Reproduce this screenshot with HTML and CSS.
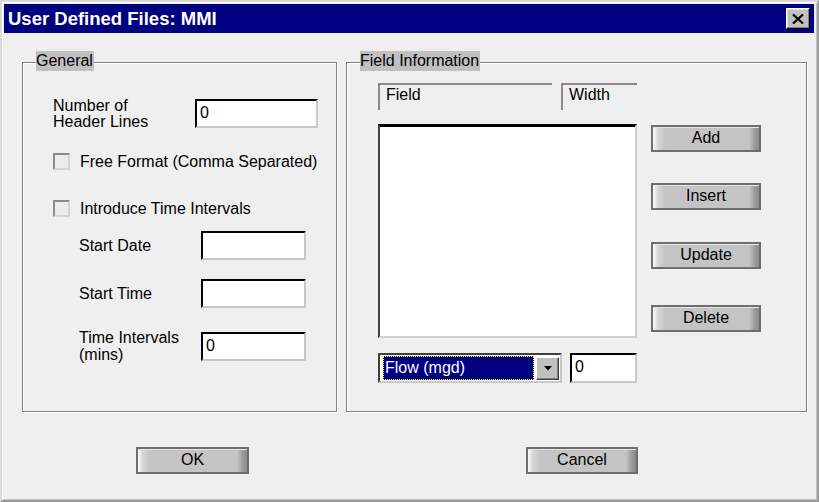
FILE: index.html
```html
<!DOCTYPE html>
<html>
<head>
<meta charset="utf-8">
<title>User Defined Files: MMI</title>
<link rel="stylesheet" href="styles.css">
</head>
<body>
<div class="window">
  <div class="titlebar">
    <span class="title">User Defined Files: MMI</span>
    <div class="close">
      <svg width="12" height="10" viewBox="0 0 12 10"><path d="M1 0.5 L11 9.5 M11 0.5 L1 9.5" stroke="#000" stroke-width="2.2" fill="none"/></svg>
    </div>
  </div>
  <div class="groups">
    <div class="group general">
      <div class="legend">General</div>
      <div class="row row-header">
        <div class="lbl lbl-header">Number of<br>Header Lines</div>
        <div class="textbox tb-header">0</div>
      </div>
      <div class="row check-row cr-1">
        <div class="checkbox"></div>
        <div class="lbl">Free Format (Comma Separated)</div>
      </div>
      <div class="row check-row cr-2">
        <div class="checkbox"></div>
        <div class="lbl">Introduce Time Intervals</div>
      </div>
      <div class="row field-row fr-date">
        <div class="lbl lbl-sub">Start Date</div>
        <div class="textbox tb-sub"></div>
      </div>
      <div class="row field-row fr-time">
        <div class="lbl lbl-sub">Start Time</div>
        <div class="textbox tb-sub"></div>
      </div>
      <div class="row fr-int">
        <div class="lbl lbl-sub lbl-int">Time Intervals<br>(mins)</div>
        <div class="textbox tb-sub tb-int">0</div>
      </div>
    </div>
    <div class="group fieldinfo">
      <div class="legend">Field Information</div>
      <div class="fi-body">
        <div class="fi-left">
          <div class="hdr-row">
            <div class="hdr hdr-field">Field</div>
            <div class="hdr hdr-width">Width</div>
          </div>
          <div class="listbox"></div>
          <div class="combo-row">
            <div class="combo">
              <div class="combo-sel"><span>Flow (mgd)</span></div>
              <div class="combo-btn">
                <svg width="8" height="5" viewBox="0 0 8 5"><path d="M0 0 H8 L4 4.5 Z" fill="#000"/></svg>
              </div>
            </div>
            <div class="textbox tb-width">0</div>
          </div>
        </div>
        <div class="fi-buttons">
          <div class="btn b-add">Add</div>
          <div class="btn b-insert">Insert</div>
          <div class="btn b-update">Update</div>
          <div class="btn b-delete">Delete</div>
        </div>
      </div>
    </div>
  </div>
  <div class="bottom-row">
    <div class="btn b-ok">OK</div>
    <div class="btn b-cancel">Cancel</div>
  </div>
</div>
</body>
</html>
```

FILE: styles.css
```css
* { box-sizing: border-box; }
html, body { margin: 0; padding: 0; }
body {
  width: 819px;
  height: 502px;
  overflow: hidden;
  font-family: "Liberation Sans", Arial, sans-serif;
  font-size: 16px;
  color: #000;
  background: #eeeeee;
}
.window {
  width: 819px;
  height: 502px;
  border-style: solid;
  border-width: 2px;
  border-color: #dadada #9c9c9c #9c9c9c #dadada;
  box-shadow: inset 1px 1px 0 #fff, inset -1px -1px 0 #c4c4c4;
  padding: 2px;
  background: #efefef;
}
.titlebar {
  height: 29px;
  margin-right: 1px;
  background: #000080;
  display: flex;
  align-items: center;
  justify-content: space-between;
  padding-left: 4px;
  padding-right: 4px;
}
.title {
  color: #fff;
  font-weight: bold;
  font-size: 18.5px;
  line-height: 20px;
}
.close {
  width: 24px;
  height: 21px;
  background: #c0c0c0;
  border-style: solid;
  border-width: 1px;
  border-color: #fff #000 #000 #fff;
  box-shadow: inset -1px -1px 0 #808080, inset 1px 1px 0 #dfdfdf;
  display: flex;
  align-items: center;
  justify-content: center;
}
.groups {
  display: flex;
  gap: 9px;
  margin-top: 29px;
  padding-left: 18px;
}
.group {
  height: 350px;
  border: 1px solid #808080;
  box-shadow: 1px 1px 0 #fff, inset 1px 1px 0 #fff;
}
.general { width: 315px; }
.fieldinfo { width: 461px; }
.legend {
  width: fit-content;
  margin: -12px 0 0 13px;
  background: #c0c0c0;
  line-height: 20px;
  height: 20px;
  padding: 0 1px 0 0;
}
.row { display: flex; }
.lbl { line-height: 17px; white-space: nowrap; }
.row-header {
  margin-top: 27px;
  padding-left: 30px;
  align-items: flex-start;
}
.lbl-header { width: 142px; line-height: 16px; }
.textbox {
  background: #fff;
  border-style: solid;
  border-width: 2px;
  border-color: #000 #c8c8c8 #c8c8c8 #000;
  padding-left: 3px;
  line-height: 24px;
  height: 29px;
}
.tb-header { width: 123px; margin-top: 1px; }
.check-row {
  padding-left: 30px;
  align-items: center;
  gap: 10px;
  height: 17px;
}
.cr-1 { margin-top: 23px; }
.cr-2 { margin-top: 30px; }
.checkbox {
  width: 17px;
  height: 17px;
  border-style: solid;
  border-width: 2px;
  border-color: #8a8a8a #d4d4d4 #d4d4d4 #8a8a8a;
  background: #ececec;
}
.field-row {
  padding-left: 56px;
  align-items: center;
  height: 29px;
}
.fr-date { margin-top: 14px; }
.fr-time { margin-top: 19px; }
.fr-int {
  margin-top: 21px;
  padding-left: 56px;
  align-items: flex-start;
}
.lbl-sub { width: 122px; }
.tb-sub { width: 105px; }
.tb-int { margin-top: 3px; }

.fi-body {
  display: flex;
  gap: 14px;
  padding-left: 31px;
}
.fi-left { width: 259px; }
.hdr-row {
  display: flex;
  gap: 9px;
  margin-top: 12px;
  height: 27px;
}
.hdr {
  border-top: 2px solid #8a8a8a;
  border-left: 2px solid #8a8a8a;
  padding: 1px 0 0 6px;
  line-height: 17px;
}
.hdr-field { width: 174px; }
.hdr-width { width: 76px; }
.listbox {
  margin-top: 14px;
  height: 214px;
  background: #fff;
  border-style: solid;
  border-width: 2px;
  border-color: #000 #d0d0d0 #d0d0d0 #404040;
  box-shadow: inset 0 1px 0 #000;
}
.combo-row {
  display: flex;
  gap: 8px;
  margin-top: 15px;
  height: 30px;
}
.combo {
  width: 184px;
  height: 30px;
  border-style: solid;
  border-width: 2px;
  border-color: #404040 #c8c8c8 #c8c8c8 #404040;
  background: #fff;
  display: flex;
  align-items: center;
  padding: 0 1px 0 3px;
  gap: 2px;
}
.combo-sel {
  flex: 1;
  height: 24px;
  background: #000080;
  border: 1px dotted #ffff00;
  color: #fff;
  line-height: 21px;
  padding-left: 1px;
}
.combo-btn {
  width: 23px;
  height: 23px;
  background: #c0c0c0;
  border-style: solid;
  border-width: 1px;
  border-color: #fff #404040 #404040 #fff;
  box-shadow: inset -1px -1px 0 #808080;
  display: flex;
  align-items: center;
  justify-content: center;
}
.tb-width { width: 67px; height: 30px; }

.fi-buttons {
  width: 110px;
  display: flex;
  flex-direction: column;
}
.btn {
  height: 27px;
  border: 2px solid #6e6e6e;
  background: linear-gradient(to right, #fbfbfb 0, #d6d6d6 5px, #c4c4c4 12px, #c4c4c4 calc(100% - 10px), #9a9a9a calc(100% - 4px), #8a8a8a 100%);
  box-shadow: inset 0 1px 0 #e6e6e6;
  text-align: center;
  line-height: 22px;
}
.b-add { margin-top: 54px; }
.b-insert { margin-top: 31px; }
.b-update { margin-top: 32px; }
.b-delete { margin-top: 36px; }

.bottom-row {
  display: flex;
  margin-top: 35px;
  padding-left: 132px;
}
.b-ok { width: 113px; }
.b-cancel { width: 112px; margin-left: 277px; }
```
